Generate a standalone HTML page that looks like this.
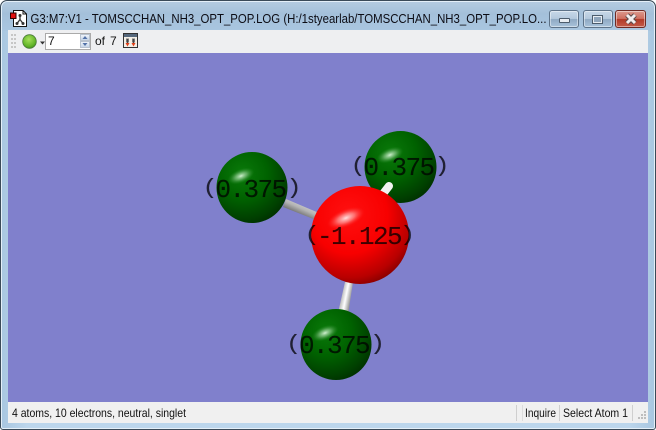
<!DOCTYPE html>
<html><head><meta charset="utf-8">
<style>
html,body{margin:0;padding:0;background:#fff;}
#win{position:absolute;left:0;top:0;width:656px;height:430px;overflow:hidden;box-sizing:border-box;border:1px solid #3a4a58;border-radius:7px 7px 3px 3px;background:linear-gradient(90deg,#a8c6e0 0,#bcd6ec 4%,#bcd6ec 96%,#a8c6e0 100%);box-shadow:inset 0 0 0 1px #e4eff8;}
#titlebg{position:absolute;left:1px;top:1px;right:1px;height:29px;background:linear-gradient(180deg,#b4cbe0 0,#a4c0da 40%,#a9c6e0 100%);border-radius:6px 6px 0 0;}
#client{position:absolute;left:7px;top:29px;width:640px;height:393px;background:#eef0f2;}
#tb{position:absolute;left:0;top:0;width:640px;height:23px;background:#eeeff1;}
#vp{position:absolute;left:0;top:23px;width:640px;height:349px;background:#8080cc;}
#st{position:absolute;left:0;top:372px;width:640px;height:21px;background:#f0f0f0;}
.sep{position:absolute;top:3px;width:1px;height:16px;background:#cfcfcf;}
.wb{position:absolute;top:9px;height:18px;border:1px solid #5d7288;border-radius:3px;box-sizing:border-box;box-shadow:inset 0 0 0 1px rgba(255,255,255,.45);}
#spin{position:absolute;left:37px;top:3px;width:46px;height:17px;border:1px solid #aaa;box-sizing:border-box;background:#fff;font:12px/15px "Liberation Sans",sans-serif;color:#111;padding-left:2px;}
#spin .u,#spin .d{position:absolute;right:0;width:10px;height:7px;background:linear-gradient(#eef3f9,#c5d5e8);border:1px solid #b8c2ce;box-sizing:border-box;}
#spin .u{top:0}#spin .d{top:7px}
</style></head><body>
<div id="win">
<div id="titlebg"></div>

<svg style="position:absolute;left:9px;top:9px" width="20" height="18" viewBox="0 0 20 18">
<path d="M3.500 .5H13l3.500 3.500V16.500H3.500Z" fill="#fff" stroke="#111"/>
<path d="M13 .5V4h3.500" fill="none" stroke="#111"/>
<rect x=".5" y="3" width="5.500" height="5.500" fill="#e01010" stroke="#300"/>
<path d="M10 6V9.500M10 9.500L7 13.500M10 9.500L13 13.500" stroke="#333" stroke-width="1.300" fill="none"/>
<circle cx="10" cy="5.500" r="1.500" fill="#333"/><circle cx="7" cy="13.500" r="1.500" fill="#333"/><circle cx="13" cy="13.500" r="1.500" fill="#333"/>
</svg>

<svg style="position:absolute;left:0;top:0" width="654" height="30">
<text x="29.500" y="22" font-family="Liberation Sans,sans-serif" font-size="12.500" fill="#0c0c14" textLength="516" lengthAdjust="spacingAndGlyphs">G3:M7:V1 - TOMSCCHAN_NH3_OPT_POP.LOG (H:/1styearlab/TOMSCCHAN_NH3_OPT_POP.LO...</text>
</svg>

<div class="wb" style="left:548px;width:30px;background:linear-gradient(#c7d8e8 0,#b4c9dd 48%,#8fa9c3 52%,#a9c3db 100%);"></div>
<div style="position:absolute;left:558px;top:17px;width:11px;height:5px;background:#e8edf2;border:1px solid #4c5c6c;box-sizing:border-box;border-radius:1px"></div>
<div class="wb" style="left:582px;width:30px;background:linear-gradient(#c7d8e8 0,#b4c9dd 48%,#8fa9c3 52%,#a9c3db 100%);"></div>
<div style="position:absolute;left:591px;top:14px;width:11px;height:9px;border:2px solid #e8edf2;outline:1px solid #4c5c6c;outline-offset:-1px;box-sizing:border-box;background:#8fa5bb"></div>
<div class="wb" style="left:614px;width:31px;background:linear-gradient(#dc9a8e 0,#cf6f60 48%,#b23a28 52%,#c45a48 100%);border-color:#6e2a24"></div>
<svg style="position:absolute;left:622px;top:12px" width="16" height="12" viewBox="0 0 16 12"><path d="M4 2L12 10M12 2L4 10" stroke="#5a4a4a" stroke-width="5"/><path d="M4 2L12 10M12 2L4 10" stroke="#f2eeee" stroke-width="3"/></svg>

<div id="client">
<div id="tb">
<svg style="position:absolute;left:3px;top:3px" width="6" height="17"><g fill="#c6c6c6"><rect x="0" y="1" width="2" height="2"/><rect x="3" y="1" width="2" height="2"/><rect x="0" y="5" width="2" height="2"/><rect x="3" y="5" width="2" height="2"/><rect x="0" y="9" width="2" height="2"/><rect x="3" y="9" width="2" height="2"/><rect x="0" y="13" width="2" height="2"/><rect x="3" y="13" width="2" height="2"/></g></svg>
<svg style="position:absolute;left:14px;top:3px" width="24" height="17"><defs><radialGradient id="bt" cx=".45" cy=".35" r=".7"><stop offset="0" stop-color="#a6e05c"/><stop offset=".7" stop-color="#62b528"/><stop offset="1" stop-color="#3e8a1c"/></radialGradient></defs><circle cx="7.500" cy="8.500" r="6.800" fill="url(#bt)" stroke="#4a7a3a" stroke-width=".8"/><path d="M18 8.500h5l-2.500 3z" fill="#333"/></svg>
<div id="spin">7<span class="u"><svg width="8" height="5" style="display:block"><path d="M1.500 4L4 1l2.500 3z" fill="#5272a8"/></svg></span><span class="d"><svg width="8" height="5" style="display:block"><path d="M1.500 1L4 4l2.500-3z" fill="#5272a8"/></svg></span></div>
<div style="position:absolute;left:87px;top:4px;font:12px/15px 'Liberation Sans',sans-serif;color:#111">of</div>
<div style="position:absolute;left:102px;top:4px;font:12px/15px 'Liberation Sans',sans-serif;color:#111">7</div>
<svg style="position:absolute;left:115px;top:3px" width="15" height="15"><rect x=".5" y=".5" width="14" height="14" fill="#f4efe6" stroke="#333"/><rect x="1" y="1" width="13" height="3" fill="#56687c"/><path d="M3 5.500h3v4H3zM9 5.500h3v4H9z" fill="#777"/><path d="M4.500 6v5M10.500 6v5" stroke="#444" stroke-width="1"/><path d="M2.500 10h4L4.500 13.500zM8.500 10h4L10.500 13.500z" fill="#e0401a"/></svg>
</div>
<div id="vp"></div>
<div id="st">
<svg style="position:absolute;left:0;top:0" width="640" height="21" font-family="Liberation Sans,sans-serif" font-size="12" fill="#111">
<text x="4" y="15" textLength="174" lengthAdjust="spacingAndGlyphs">4 atoms, 10 electrons, neutral, singlet</text>
<text x="517" y="15" textLength="31" lengthAdjust="spacingAndGlyphs">Inquire</text>
<text x="555" y="15" textLength="65" lengthAdjust="spacingAndGlyphs">Select Atom 1</text>
</svg>
<div class="sep" style="left:508px"></div><div class="sep" style="left:514px;background:#dcdcdc"></div>
<div class="sep" style="left:551px"></div>
<div class="sep" style="left:624px"></div>
<svg style="position:absolute;left:630px;top:9px" width="9" height="10"><g fill="#bdbdbd"><rect x="6" y="0" width="2" height="2"/><rect x="3" y="3" width="2" height="2"/><rect x="6" y="3" width="2" height="2"/><rect x="0" y="6" width="2" height="2"/><rect x="3" y="6" width="2" height="2"/><rect x="6" y="6" width="2" height="2"/></g></svg>
</div>
</div>

<svg style="position:absolute;left:7px;top:52px" width="640" height="349" viewBox="8 53 640 349">
<defs>
<radialGradient id="g" cx=".38" cy=".32" r=".78" fx=".36" fy=".3">
<stop offset="0" stop-color="#0a7a0a"/><stop offset=".45" stop-color="#006200"/><stop offset=".8" stop-color="#004000"/><stop offset="1" stop-color="#002800"/>
</radialGradient>
<radialGradient id="r" cx=".4" cy=".32" r=".78" fx=".38" fy=".28">
<stop offset="0" stop-color="#ff1010"/><stop offset=".5" stop-color="#f80000"/><stop offset=".8" stop-color="#b80000"/><stop offset="1" stop-color="#680000"/>
</radialGradient>
<radialGradient id="hg"><stop offset="0" stop-color="#d0f0d0" stop-opacity="1"/><stop offset=".45" stop-color="#80c080" stop-opacity=".7"/><stop offset="1" stop-color="#2a8a2a" stop-opacity="0"/></radialGradient>
<radialGradient id="hr"><stop offset="0" stop-color="#ffe0e0" stop-opacity="1"/><stop offset=".45" stop-color="#ff9090" stop-opacity=".75"/><stop offset="1" stop-color="#ff2020" stop-opacity="0"/></radialGradient>
<linearGradient id="b1" gradientUnits="userSpaceOnUse" x1="298" y1="213" x2="302" y2="204"><stop offset="0" stop-color="#7c7c7c"/><stop offset=".55" stop-color="#b4b4b4"/><stop offset="1" stop-color="#c8c8c8"/></linearGradient>
<linearGradient id="b3" gradientUnits="userSpaceOnUse" x1="341" y1="298" x2="351" y2="300"><stop offset="0" stop-color="#b8b8b8"/><stop offset=".45" stop-color="#ffffff"/><stop offset="1" stop-color="#8c8c8c"/></linearGradient>
</defs>

<circle cx="400.500" cy="167" r="36" fill="url(#g)"/>
<ellipse cx="390" cy="155" rx="14" ry="7" fill="url(#hg)" transform="rotate(-22 390 155)"/>
<path d="M382 195L389 186" stroke="#f2f2f2" stroke-width="8" stroke-linecap="round"/>

<polygon points="286,199 319,213 316,220 283,207" fill="url(#b1)"/>
<polygon points="345,282 353,282 348,315 338,313" fill="url(#b3)"/>

<circle cx="252" cy="187.500" r="35.500" fill="url(#g)"/>
<ellipse cx="241" cy="176" rx="14" ry="7" fill="url(#hg)" transform="rotate(-22 241 176)"/>

<circle cx="336" cy="344.500" r="35.500" fill="url(#g)"/>
<ellipse cx="325" cy="333" rx="14" ry="7" fill="url(#hg)" transform="rotate(-22 325 333)"/>

<circle cx="360" cy="235" r="49" fill="url(#r)"/>
<ellipse cx="346" cy="218" rx="20" ry="9" fill="url(#hr)" transform="rotate(-22 346 218)"/>

<g font-family="Liberation Mono,monospace" font-size="26" fill="#000" fill-opacity=".75" stroke="#000" stroke-opacity=".2" stroke-width=".3" letter-spacing="-1.6">
<text x="215.500" y="197">0.375</text>
<text x="363.500" y="175">0.375</text>
<text x="299" y="353">0.375</text>
<text x="317" y="244">-1.125</text>
</g>
<g font-family="Liberation Mono,monospace" font-size="21" fill="#000" fill-opacity=".75" stroke="#000" stroke-opacity=".2" stroke-width=".3">
<text transform="translate(202.500 193.500) scale(1.2 1)">(</text>
<text transform="translate(286.500 193.500) scale(1.2 1)">)</text>
<text transform="translate(350.500 171.500) scale(1.2 1)">(</text>
<text transform="translate(434.500 171.500) scale(1.2 1)">)</text>
<text transform="translate(286 349.500) scale(1.2 1)">(</text>
<text transform="translate(370 349.500) scale(1.2 1)">)</text>
<text transform="translate(304.500 240.500) scale(1.2 1)">(</text>
<text transform="translate(400 240.500) scale(1.2 1)">)</text>
</g>
</svg>
</div>
</body></html>
